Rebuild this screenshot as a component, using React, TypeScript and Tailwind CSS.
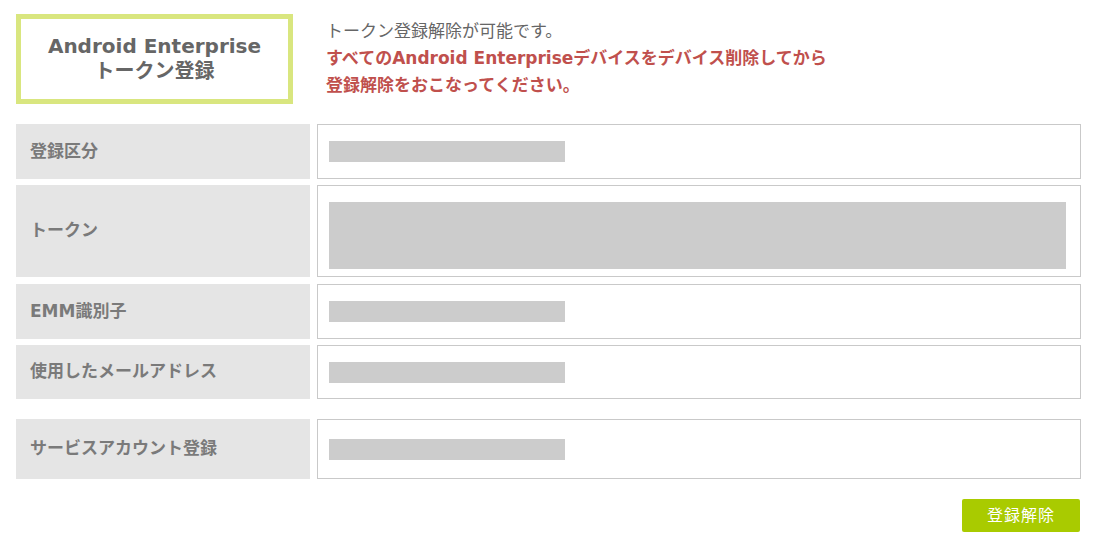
import React from 'react';

const font = { fontFamily: '"DejaVu Sans", "Noto Sans CJK JP", sans-serif' };

const Bar = () => <div className="w-[236px] h-[21px] bg-[#cccccc]" />;

interface RowProps {
  label: string;
  height: string;
  children: React.ReactNode;
  boxClass?: string;
}

const Row: React.FC<RowProps> = ({ label, height, children, boxClass }) => (
  <div className={`flex gap-[7px] ${height}`}>
    <div className="w-[294px] shrink-0 bg-[#e5e5e5] flex items-center pl-[14px] text-[17px] font-bold text-[#7a7a7a]">
      {label}
    </div>
    <div className={`flex-1 border border-[#c9c9c9] bg-white flex ${boxClass ?? 'items-center pl-[11px]'}`}>
      {children}
    </div>
  </div>
);

export default function App() {
  return (
    <div className="w-[1101px] h-[557px] bg-white pl-[16px] pr-[20px] pt-[14px]" style={font}>
      <div className="flex">
        <div className="w-[277px] h-[90px] border-[5px] border-[#d9e67f] flex flex-col items-center justify-center text-[20px] font-bold text-[#666666] leading-[25px]">
          <div>Android Enterprise</div>
          <div>トークン登録</div>
        </div>
        <div className="ml-[33px] pt-[4px] text-[17px] leading-[27px]">
          <div className="text-[#666666]">トークン登録解除が可能です。</div>
          <div className="font-bold text-[#c0504d]">すべてのAndroid Enterpriseデバイスをデバイス削除してから</div>
          <div className="font-bold text-[#c0504d]">登録解除をおこなってください。</div>
        </div>
      </div>

      <div className="mt-[20px] flex flex-col">
        <Row label="登録区分" height="h-[55px]">
          <Bar />
        </Row>
        <div className="h-[6px]" />
        <Row label="トークン" height="h-[92px]" boxClass="pt-[16px] pb-[7px] pl-[11px] pr-[14px]">
          <div className="flex-1 bg-[#cccccc]" />
        </Row>
        <div className="h-[7px]" />
        <Row label="EMM識別子" height="h-[55px]">
          <Bar />
        </Row>
        <div className="h-[6px]" />
        <Row label="使用したメールアドレス" height="h-[54px]">
          <Bar />
        </Row>
        <div className="h-[20px]" />
        <Row label="サービスアカウント登録" height="h-[60px]">
          <Bar />
        </Row>
      </div>

      <div className="mt-[20px] flex justify-end pr-[1px]">
        <button className="w-[118px] h-[33px] rounded-[2px] bg-[#a9cb00] text-white text-[16px] tracking-[1px]">
          登録解除
        </button>
      </div>
    </div>
  );
}
